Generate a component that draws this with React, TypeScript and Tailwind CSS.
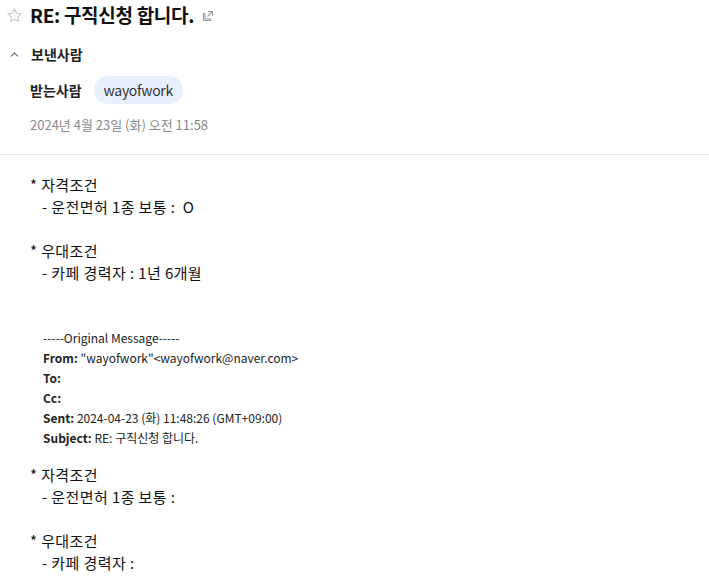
import { ChevronUp } from 'lucide-react'

const font = { fontFamily: '"Noto Sans CJK KR", "Noto Sans", sans-serif' }

function StarIcon() {
  return (
    <svg width="17" height="17" viewBox="0 0 24 24" fill="none" stroke="#c8c8d0" strokeWidth="1.5" strokeLinejoin="round">
      <path d="M12 2.5l2.9 6.2 6.6.7-5 4.5 1.4 6.6L12 17.2l-5.9 3.3 1.4-6.6-5-4.5 6.6-.7z" />
    </svg>
  )
}

function PopupIcon() {
  return (
    <svg width="12" height="12" viewBox="0 0 12 12" fill="none" stroke="#9a9a9a" strokeWidth="1.1">
      <path d="M3 3.5H1.5v7h7V9" />
      <path d="M6 1.5h4.5V6" />
      <path d="M10.5 1.5L5.5 6.5" />
      <path d="M3 3.5V9h6" />
    </svg>
  )
}

function BodyLines({ lines }: { lines: string[] }) {
  return (
    <div className="text-[15px] leading-[22px] text-[#111] tracking-[0.4px] whitespace-pre">
      {lines.map((line, i) =>
        line === '' ? (
          <div key={i} className="h-[22px]" />
        ) : line.startsWith('-') ? (
          <div key={i} className="pl-3">{line}</div>
        ) : (
          <div key={i}>{line}</div>
        )
      )}
    </div>
  )
}

export default function App() {
  return (
    <div className="bg-white w-[709px] h-[583px] overflow-hidden" style={font}>
      <div className="pb-[19px]">
        <div className="flex items-center h-[30px] pl-[6px] gap-[7px]">
          <StarIcon />
          <h1 className="text-[19px] font-bold text-[#111] tracking-[-0.3px]">RE: 구직신청 합니다.</h1>
          <span className="ml-[1px] mt-[2px]"><PopupIcon /></span>
        </div>
        <div className="flex items-center h-[18px] mt-[15px] pl-[8px] gap-[10px]">
          <ChevronUp size={13} strokeWidth={2} className="text-[#666]" />
          <span className="text-[14px] font-bold text-[#222]">보낸사람</span>
        </div>
        <div className="flex items-center mt-[13px] pl-[30px] gap-[12px]">
          <span className="text-[14px] font-bold text-[#222]">받는사람</span>
          <span className="h-[28px] px-[10px] flex items-center rounded-full bg-[#e7f0fc] text-[14px] text-[#333] tracking-[-0.3px]">wayofwork</span>
        </div>
        <div className="mt-[11px] pl-[30px] text-[13px] text-[#8a8a8a]">2024년 4월 23일 (화) 오전 11:58</div>
      </div>
      <div className="border-t border-[#e6e6e6]" />
      <div className="pl-[30px] pt-[19px]">
        <BodyLines lines={['* 자격조건', '- 운전면허 1종 보통 :  O', '', '* 우대조건', '- 카페 경력자 : 1년 6개월', '', '']} />
        <div className="pl-[13px] text-[12px] leading-[20px] text-[#222]">
          <div>-----Original Message-----</div>
          <div><b>From:</b> "wayofwork"&lt;wayofwork@naver.com&gt;</div>
          <div><b>To:</b></div>
          <div><b>Cc:</b></div>
          <div><b>Sent:</b> 2024-04-23 (화) 11:48:26 (GMT+09:00)</div>
          <div><b>Subject:</b> RE: 구직신청 합니다.</div>
        </div>
        <div className="mt-[16px]">
          <BodyLines lines={['* 자격조건', '- 운전면허 1종 보통 :', '', '* 우대조건', '- 카페 경력자 :']} />
        </div>
      </div>
    </div>
  )
}
